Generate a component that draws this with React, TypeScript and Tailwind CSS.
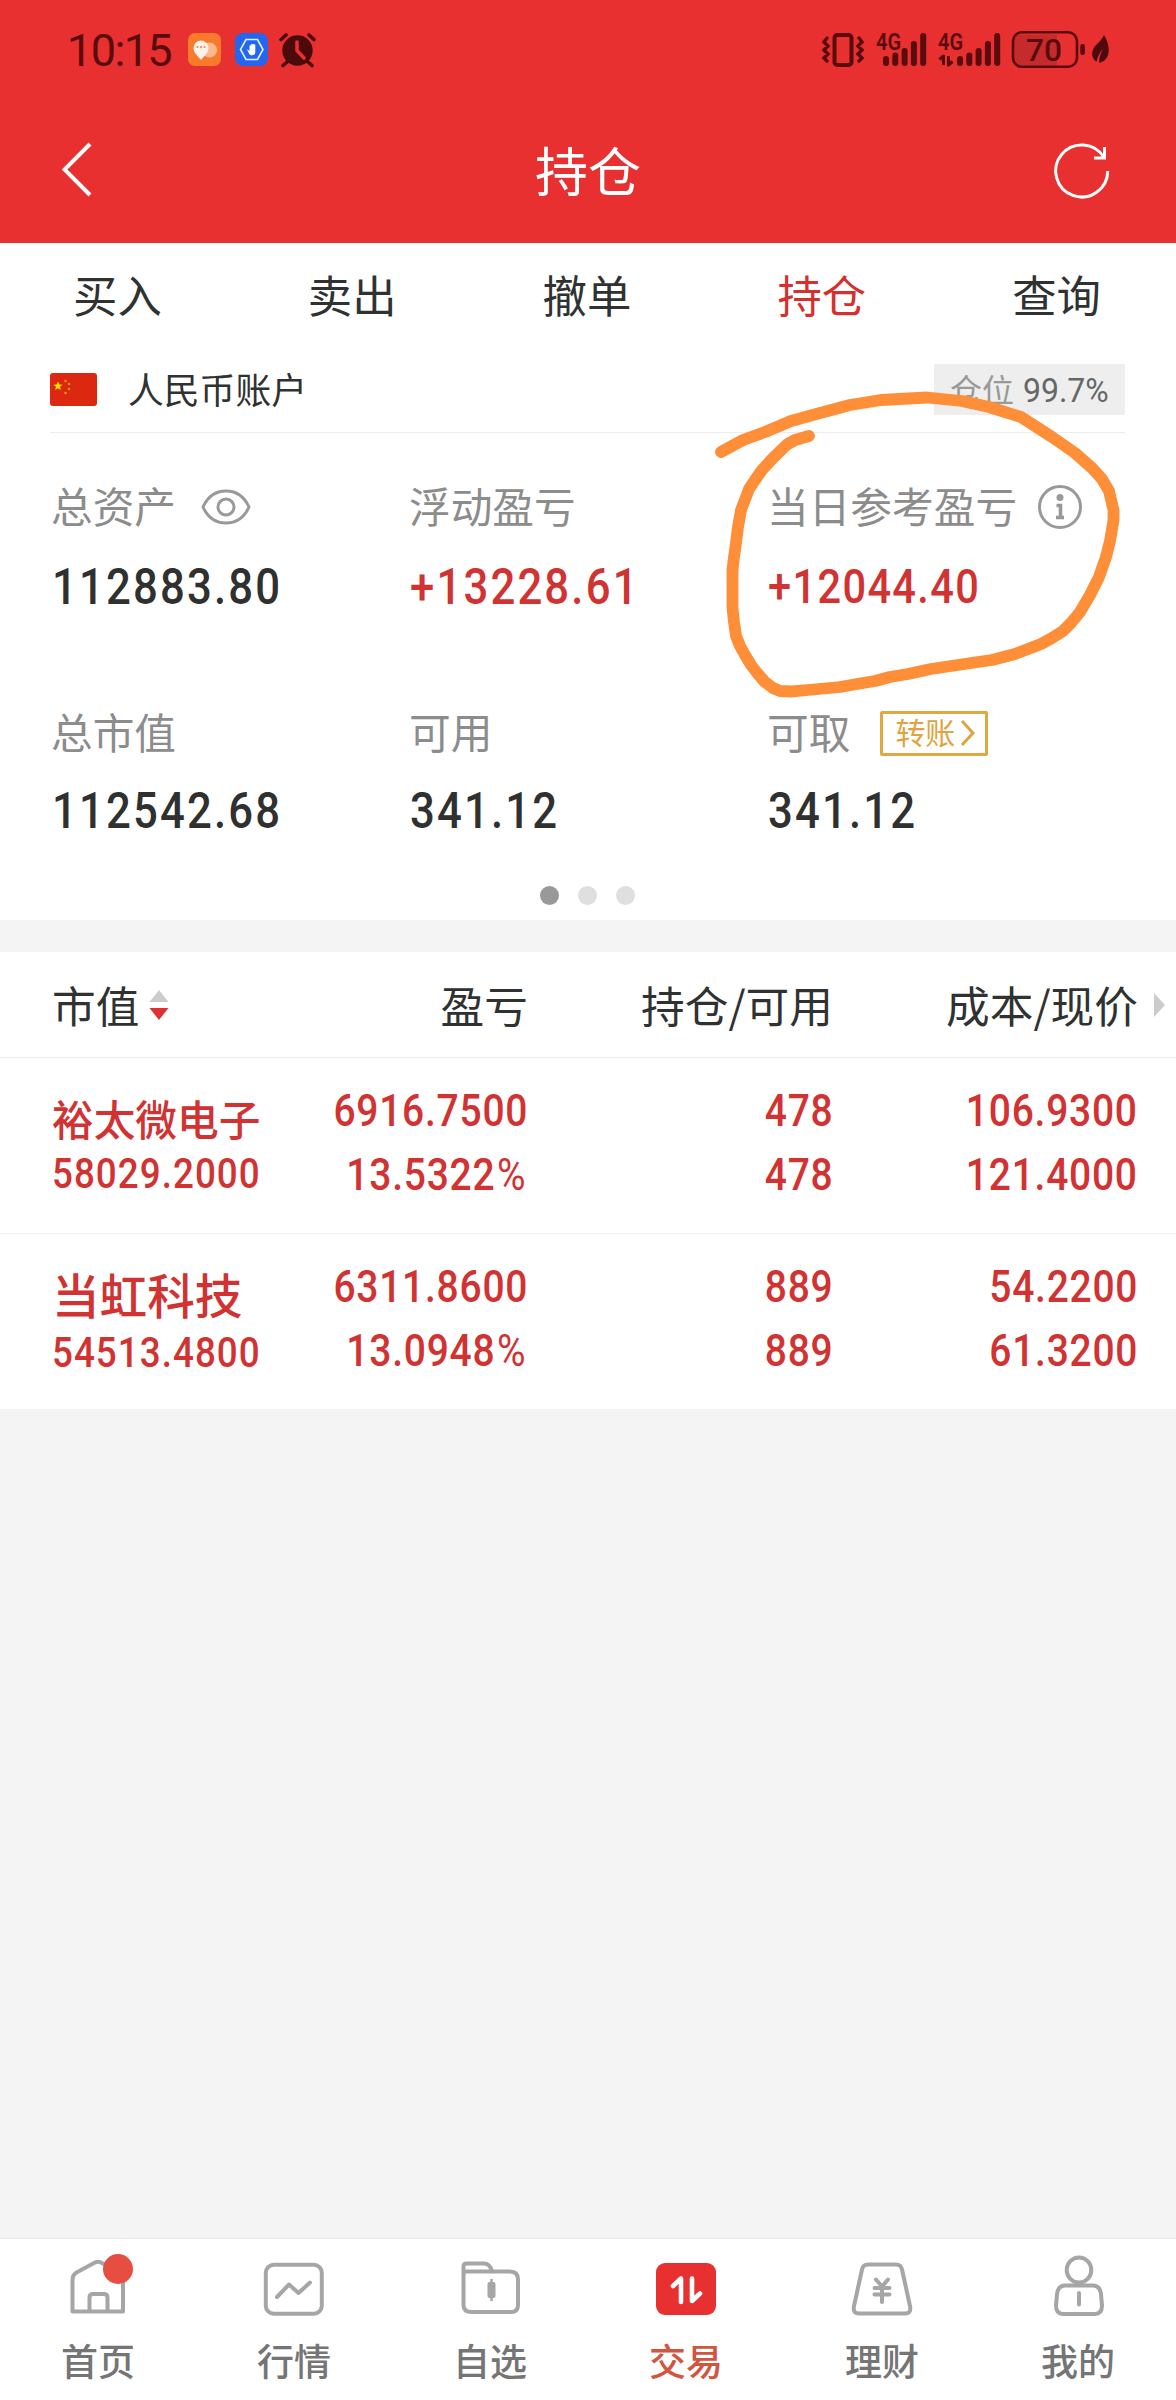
import type { ReactNode } from "react";

const CJK = "font-['Noto_Sans_CJK_SC',sans-serif]";
const NUM = "inline-block whitespace-nowrap font-['Roboto',sans-serif]";

function SignalBars() {
  return (
    <g fill="#5a0b0d">
      <rect x="0" y="23" width="6" height="10" rx="3" />
      <rect x="9.3" y="19.5" width="6" height="13.5" rx="3" />
      <rect x="18.6" y="15" width="6" height="18" rx="3" />
      <rect x="27.9" y="8" width="6" height="25" rx="3" />
      <rect x="37.2" y="0" width="6" height="33" rx="3" />
    </g>
  );
}

function StatusBar() {
  return (
    <div className="flex h-[99px] items-center justify-between pl-[67px] pr-[66px] text-[#5a0b0d]">
      <div className="flex items-center">
        <span className="w-[121px] whitespace-nowrap pt-[2px] font-['Roboto',sans-serif] text-[45px] leading-[60px] tracking-[-1.6px]">10:15</span>
        <svg className="h-[34px] w-[34px]" viewBox="0 0 34 34">
          <rect width="33" height="33" rx="7" fill="#f97a2a" />
          <circle cx="21.5" cy="17" r="7.5" fill="#fcb98f" />
          <path d="M13 7.500a7.500 7.500 0 0 1 7.500 7.500c0 5-4.500 8-7.500 12c-3-4-7.500-7-7.500-12a7.500 7.500 0 0 1 7.500-7.500z" fill="#fff2ea" />
          <circle cx="9.500" cy="14" r="1.100" fill="#f08a4c" />
          <circle cx="13" cy="14" r="1.100" fill="#f08a4c" />
          <circle cx="16.500" cy="14" r="1.100" fill="#f08a4c" />
        </svg>
        <svg className="ml-[13px] h-[34px] w-[34px]" viewBox="0 0 34 34">
          <rect width="33" height="33" rx="8" fill="#2467ee" />
          <path d="M11 6.500h11.500l5.500 10-5.500 10H11l-5.500-10z" fill="none" stroke="#dcf4ff" strokeWidth="1.600" />
          <path d="M12 16l2.500 2v-5.500h1.300v3.500v-4.800h1.500v4.800v-5h1.500v5v-4.500h1.500v7.500c0 2-1.300 3.300-3.500 3.300c-2 0-3-1.500-4.800-6.300z" fill="#fff" />
        </svg>
        <svg className="ml-[10px] h-[36px] w-[37px]" viewBox="0 0 37 36">
          <g fill="none" stroke="#4c0a0d" strokeWidth="3.600" strokeLinecap="round">
            <path d="M2 7.500L7 3M30 3l5 4.500M8 30l-4 3.500M29 30l4 3.500" />
          </g>
          <circle cx="18.500" cy="18.500" r="15.200" fill="#4c0a0d" />
          <path d="M18 10v8.500l7 7.500" fill="none" stroke="#e7302f" strokeWidth="3.600" strokeLinecap="round" />
        </svg>
      </div>
      <svg className="h-[40px] w-[288px]" viewBox="822 30 288 40">
        <g fill="none" stroke="#5a0b0d" strokeWidth="4">
          <rect x="834.500" y="35" width="17" height="30" rx="3" />
          <path d="M827 38l-3 4 4 4-4 4 4 4-4 4 3 3M859 38l3 4-4 4 4 4-4 4 4 4-3 3" strokeWidth="3.400" strokeLinecap="round" />
        </g>
        <g fill="#5a0b0d" fontFamily="Roboto, sans-serif" fontWeight="600" fontSize="23">
          <text x="876" y="49.500" textLength="25" lengthAdjust="spacingAndGlyphs">4G</text>
          <text x="938" y="49.500" textLength="25" lengthAdjust="spacingAndGlyphs">4G</text>
        </g>
        <g transform="translate(883 33)"><SignalBars /></g>
        <g transform="translate(957 33)"><SignalBars /></g>
        <path d="M939.500 59.500l4-3.500v9M948.500 56v9l4-3.500" fill="none" stroke="#5a0b0d" strokeWidth="3" strokeLinejoin="round" />
        <path d="M1020 34.500h37v31h-37a6 6 0 0 1-6-6v-19a6 6 0 0 1 6-6z" fill="#c62b2c" />
        <rect x="1013" y="32.200" width="64" height="34.600" rx="9" fill="none" stroke="#5a0b0d" strokeWidth="2.600" />
        <rect x="1080.300" y="44" width="4.600" height="11" rx="2" fill="#5a0b0d" />
        <text x="1026" y="60.500" fill="#5a0b0d" fontFamily="Roboto, sans-serif" fontWeight="500" fontSize="31.500" textLength="36" lengthAdjust="spacingAndGlyphs">70</text>
        <path d="M1104 35c4 7 6 14 4 20c-1.500 4.500-5 7.500-9 7.700c0-5 1.500-9 4-14c-3.500 4-5.500 8-6.300 13c-5-3-5.800-9-2.700-14c2.500-4 7-6 10-12.700z" fill="#4c0a0d" />
      </svg>
    </div>
  );
}

function Header() {
  return (
    <header className="bg-[#e7302f]">
      <StatusBar />
      <div className="flex h-[144px] items-center justify-between pb-[4px] pl-[62px] pr-[66px]">
        <svg className="h-[56px] w-[60px]" viewBox="0 0 60 56" fill="none" stroke="#fff" strokeWidth="4">
          <path d="M28 3L2.500 28.500 28 54" />
        </svg>
        <h1 className={`${CJK} text-[53px] leading-[72px] text-white`}>持仓</h1>
        <svg className="h-[58px] w-[56px] overflow-visible" viewBox="0 0 56 58" fill="none" stroke="#fff" strokeWidth="3">
          <path d="M53.700 31A26 26 0 1 1 50 17.600" />
          <path d="M50.500 7V18H40" />
        </svg>
      </div>
    </header>
  );
}

function Tabs() {
  const tabs = ["买入", "卖出", "撤单", "持仓", "查询"];
  return (
    <nav className={`grid h-[106px] grid-cols-5 items-center pb-[4px] pr-[2px] text-center text-[44.400px] leading-[60px] text-[#303232] ${CJK}`}>
      {tabs.map((t) => (
        <span key={t} className={t === "持仓" ? "text-[#d4302f]" : ""}>{t}</span>
      ))}
    </nav>
  );
}

function AccountRow() {
  return (
    <div className="ml-[50px] mr-[51px] flex h-[84px] items-center border-b border-[#ececec] pb-[2px]">
      <svg className="h-[33px] w-[47px]" viewBox="0 0 47 33">
        <rect width="47" height="33" rx="3" fill="#dc2711" />
        <path d="M8 8.500l1.300 3 3.200.2-2.500 2 .9 3.200L8 15.200 5.100 16.900l.9-3.200-2.500-2 3.200-.2z" fill="#fce303" />
        <g fill="#f0950e">
          <circle cx="15.500" cy="8" r="1.300" />
          <circle cx="19" cy="11" r="1.300" />
          <circle cx="19" cy="16" r="1.300" />
          <circle cx="15.500" cy="20" r="1.300" />
        </g>
      </svg>
      <span className={`ml-[31px] pb-[3px] ${CJK} text-[35.800px] leading-[50px] text-[#303232]`}>人民币账户</span>
      <div className="ml-auto flex h-[51px] w-[191px] items-center bg-[#eeeeee] pl-[16px]">
        <span className={`${CJK} pb-[3px] text-[32px] leading-[44px] text-[#999999]`}>仓位</span>
        <span className={`${NUM} ml-[9px] origin-left scale-x-[0.940] text-[34px] leading-[44px] text-[#666666]`}>99.7%</span>
      </div>
    </div>
  );
}

function Metric({ label, value, tone = "text-[#303030]", size = "text-[50.500px] tracking-[2.500px]", gap = "mt-[19px]", extra }: { label: string; value: string; tone?: string; size?: string; gap?: string; extra?: ReactNode }) {
  return (
    <div>
      <div className={`flex h-[60px] items-center ${CJK} text-[41.700px] leading-[60px] whitespace-nowrap text-[#8c8c8c]`}>
        <span className="pb-[4px]">{label}</span>
        {extra}
      </div>
      <div className={`${gap} h-[60px]`}>
        <span className={`${NUM} ${size} ${tone} ml-[1px] origin-left scale-x-[0.865] font-medium leading-[60px]`}>{value}</span>
      </div>
    </div>
  );
}

function Summary() {
  return (
    <section className="relative bg-white">
      <Tabs />
      <AccountRow />
      <div className="grid h-[487px] grid-cols-[358px_358px_1fr] grid-rows-[226px_182px] pl-[51px] pt-[44px]">
        <Metric
          label="总资产"
          value="112883.80"
          gap="mt-[20px]"
          extra={
            <svg className="ml-[25px] h-[38px] w-[50px]" viewBox="0 0 50 38" fill="none" stroke="#999" strokeWidth="3">
              <path d="M2 19C7 8 15 3 25 3s18 5 23 16C43 30 35 35 25 35S7 30 2 19z" />
              <circle cx="25" cy="19" r="8" />
            </svg>
          }
        />
        <Metric label="浮动盈亏" value="+13228.61" tone="text-[#d13232]" gap="mt-[20px]" />
        <Metric
          label="当日参考盈亏"
          value="+12044.40"
          tone="text-[#d13232]"
          size="text-[48px] tracking-[1.600px]"
          gap="mt-[20px]"
          extra={
            <svg className="ml-[20px] h-[46px] w-[46px]" viewBox="0 0 46 46" fill="none" stroke="#999">
              <circle cx="23" cy="23" r="20.500" strokeWidth="3" />
              <circle cx="23" cy="13.500" r="3.500" fill="#999" stroke="none" />
              <path d="M19.500 21.500h4v12M19 33.500h8" strokeWidth="3.600" />
            </svg>
          }
        />
        <Metric label="总市值" value="112542.68" gap="mt-[18px]" />
        <Metric label="可用" value="341.12" gap="mt-[18px]" />
        <Metric
          label="可取"
          value="341.12"
          gap="mt-[18px]"
          extra={
            <span className="ml-[30px] flex h-[45px] w-[108px] items-center rounded-[2px] border-[3px] border-[#e0a840] pl-[12px] text-[30px] leading-[39px] text-[#dfa440]">
              <span className="pb-[3px]">转账</span>
              <svg className="ml-[4px] h-[28px] w-[18px]" viewBox="0 0 18 28" fill="none" stroke="#dfa440" strokeWidth="3">
                <path d="M3 2l11 12L3 26" />
              </svg>
            </span>
          }
        />
        <div className="col-span-3 mr-[53px] flex h-[20px] items-center justify-center gap-[19px]">
          <i className="h-[19px] w-[19px] rounded-full bg-[#999999]" />
          <i className="h-[19px] w-[19px] rounded-full bg-[#dfdfdf]" />
          <i className="h-[19px] w-[19px] rounded-full bg-[#dfdfdf]" />
        </div>
      </div>
      <svg className="pointer-events-none absolute left-[700px] top-[137px] h-[330px] w-[440px]" viewBox="700 380 440 330" fill="none" stroke="#ff8e38" strokeWidth="11.800" strokeLinecap="round" strokeLinejoin="round">
        <path d="M721 452L743 440L765 432L791 421L820 413L850 405L881 400L927 397.500L962 401L989 407L1021 417L1052 437L1075 453L1092 468L1102 479L1109 491L1113.500 510L1113.500 520L1110 541L1106 557L1099 577L1090 595L1080 612L1071 623L1063 631L1052 638L1041 644L1028 649L1015 654L992 660L971 663L931 669L908 674L890 677L875 681L857 684L840 687L824 688.500L808 690L791 691.500L780 691L773 688L765 682L758 674L751 665L745 655L740 646L736 636L734 622L732.500 608L732.500 570L734 557L736 543L738 527L741 510L746 497L749 489L755 480L762 470L774 457L787 444.500L795 440L809 436" />
      </svg>
    </section>
  );
}

type Holding = { name: string; nameSize: string; value: string; profit: string; rate: string; qty: string; avail: string; cost: string; price: string };

const holdings: Holding[] = [
  { name: "裕太微电子", nameSize: "text-[41.700px] pt-[30px]", value: "58029.2000", profit: "6916.7500", rate: "13.5322", qty: "478", avail: "478", cost: "106.9300", price: "121.4000" },
  { name: "当虹科技", nameSize: "text-[47.600px] pt-[30px]", value: "54513.4800", profit: "6311.8600", rate: "13.0948", qty: "889", avail: "889", cost: "54.2200", price: "61.3200" },
];

function Pair({ a, b }: { a: ReactNode; b: ReactNode }) {
  return (
    <div className="flex flex-col items-end pt-[21px] text-[#d13232]">
      <span className={`${NUM} h-[64px] origin-right scale-x-[0.865] text-[45px] font-medium leading-[64px] tracking-[0.900px]`}>{a}</span>
      <span className={`${NUM} h-[64px] origin-right scale-x-[0.865] text-[45px] font-medium leading-[64px] tracking-[0.900px]`}>{b}</span>
    </div>
  );
}

const COLS = "grid grid-cols-[228px_248px_305px_305px] pl-[52px]";

function HoldingsTable() {
  return (
    <section className="bg-white">
      <div className={`${COLS} h-[106px] items-center border-b border-[#ececec] text-right text-[43.700px] leading-[60px] text-[#303232] ${CJK}`}>
        <div className="flex items-center">
          <span className="pb-[2px]">市值</span>
          <svg className="ml-[10px] h-[32px] w-[20px]" viewBox="0 0 20 32">
            <path d="M10 1l9.500 12H.5z" fill="#cccccc" />
            <path d="M10 31l9.500-12H.5z" fill="#e0302f" />
          </svg>
        </div>
        <div className="pb-[2px]">盈亏</div>
        <div className="pb-[2px]">持仓/可用</div>
        <div className="relative pb-[2px]">
          成本/现价
          <svg className="absolute -right-[28px] top-[18px] h-[26px] w-[13px]" viewBox="0 0 13 26">
            <path d="M1 1l11 12L1 25z" fill="#cccccc" />
          </svg>
        </div>
      </div>
      {holdings.map((h, i) => (
        <div key={h.name} className={`${COLS} ${i === 0 ? "h-[176px] border-b border-[#f0f0f0]" : "h-[175px]"}`}>
          <div className="flex flex-col text-[#d13232]">
            <span className={`${CJK} ${h.nameSize} whitespace-nowrap font-medium leading-[60px]`}>{h.name}</span>
            <span className={`${NUM} origin-left scale-x-[0.875] text-[42px] font-medium tracking-[1.200px] ${i === 0 ? "leading-[52px]" : "leading-[58px]"}`}>{h.value}</span>
          </div>
          <Pair a={h.profit} b={<>{h.rate}<span className="ml-[2px] mr-[2px] font-normal">%</span></>} />
          <Pair a={h.qty} b={h.avail} />
          <Pair a={h.cost} b={h.price} />
        </div>
      ))}
    </section>
  );
}

const icons: Record<string, ReactNode> = {
  首页: (
    <>
      <path d="M14.500 59.500V28q0-5 4-7.500L36 11q4-2.500 8 0L65 23V59.500zM31.500 59.500V45.500q0-3.500 3.500-3.500h11q3.500 0 3.500 3.500V59.500" />
      <circle cx="60" cy="17" r="15" fill="#e64e41" stroke="none" />
    </>
  ),
  行情: (
    <>
      <rect x="11.800" y="12.800" width="56" height="49" rx="8" />
      <path d="M23 45l12-12.500 9.500 8.500L56 30.500" strokeLinecap="round" />
    </>
  ),
  自选: (
    <>
      <path d="M13.500 53V14.500q0-3 3-3H34q6 0 8 8h18q8 0 8 8V53q0 7-7 7H21.500q-8 0-8-7zM13.500 19.500H42" />
      <path d="M41.500 27v22" strokeWidth="2.500" />
      <rect x="37.500" y="30" width="8" height="16" rx="2" fill="#a6a6a6" stroke="none" />
    </>
  ),
  交易: (
    <>
      <rect x="10" y="11" width="60" height="52" rx="9" fill="#e7302f" stroke="none" />
      <path d="M27 34l8-7.500V50M46 26.500V49l8-7.500" stroke="#fff" strokeWidth="4.600" strokeLinecap="round" strokeLinejoin="round" />
    </>
  ),
  理财: (
    <>
      <path d="M26 12.500H54q5 0 6 5L68 54q1.500 7.500-5 7.500H17q-6.500 0-5-7.500l8-36.500q1-5 6-5z" />
      <path d="M34 27.500l6 7 6-7M32.500 36h15M32.500 42.500h15M40 35v15" strokeLinecap="round" />
    </>
  ),
  我的: (
    <>
      <ellipse cx="41" cy="18" rx="12.300" ry="12.500" />
      <path d="M27 33.500H55q7 0 8 9l1 11q0 8.500-7 8.500H25q-7 0-7-8.500l1-11q1-9 8-9zM41 41v11.500" strokeLinecap="round" />
    </>
  ),
};

function BottomNav() {
  return (
    <nav className="grid h-[162px] grid-cols-6 border-t border-[#e9e9e9] bg-white">
      {["首页", "行情", "自选", "交易", "理财", "我的"].map((n) => (
        <div key={n} className="flex flex-col items-center pt-[13px]">
          <svg className="h-[68px] w-[80px] overflow-visible" viewBox="0 0 80 68" fill="none" stroke="#a6a6a6" strokeWidth="4" strokeLinejoin="round">
            {icons[n]}
          </svg>
          <span className={`mt-[14px] ${CJK} text-[37px] font-medium leading-[52px] ${n === "交易" ? "text-[#d2553f]" : "text-[#757575]"}`}>{n}</span>
        </div>
      ))}
    </nav>
  );
}

export default function App() {
  return (
    <div className="flex h-[2400px] w-[1176px] flex-col overflow-hidden bg-[#f4f4f4]">
      <Header />
      <Summary />
      <div className="h-[32px] shrink-0" />
      <HoldingsTable />
      <div className="flex-1" />
      <BottomNav />
    </div>
  );
}
